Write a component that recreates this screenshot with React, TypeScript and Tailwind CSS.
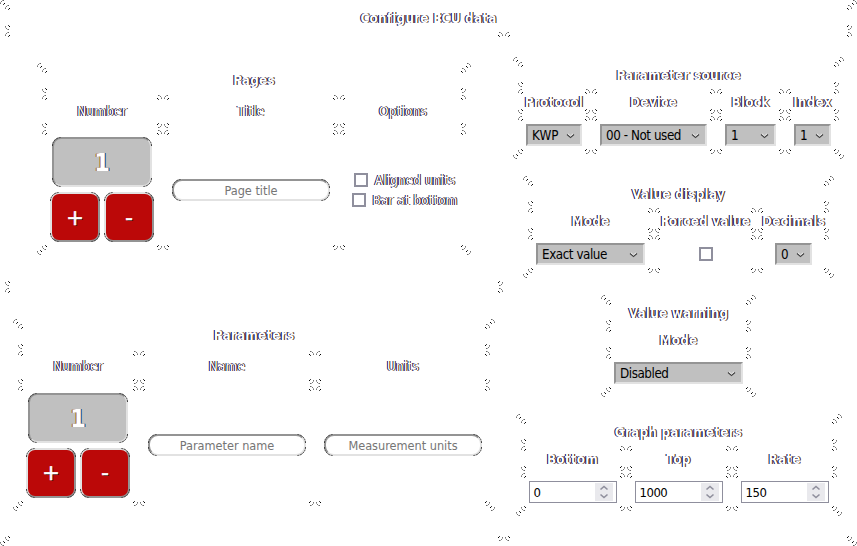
import type { ReactNode } from "react";

type Kids = { children?: ReactNode };

const flips = [
  "left-0 top-0",
  "right-0 top-0 -scale-x-100",
  "left-0 bottom-0 -scale-y-100",
  "right-0 bottom-0 -scale-x-100 -scale-y-100",
];

// Small stitched arcs drawn in the four corners of a table or a cell.
function Corners() {
  return (
    <>
      {flips.map((f) => (
        <svg key={f} className={`absolute ${f}`} width="5" height="5" shapeRendering="crispEdges">
          <path d="M0 3h1v1h-1zM1 1h1v1h-1z" fill="#777" />
          <path d="M0 2h1v1h-1zM2 0h1v1h-1z" fill="#aaa" />
          <path d="M3 0h1v1h-1z" fill="#666" />
          <path d="M4 3h1v1h-1z" fill="#000" />
          <path d="M3 4h1v1h-1z" fill="#444" />
        </svg>
      ))}
    </>
  );
}

// Dark edge that follows the rounded corners of a control.
function RoundEdges() {
  return (
    <div className="absolute -inset-[2px]">
      {flips.map((f) => (
        <svg key={f} className={`absolute ${f}`} width="10" height="10">
          <path
            d="M0.5 9A8.5 8.5 0 0 1 9 0.5"
            fill="none"
            stroke="#3a3a3a"
            strokeWidth="1"
            strokeDasharray="2 0.7"
          />
        </svg>
      ))}
    </div>
  );
}

function Cell({ children, className = "" }: Kids & { className?: string }) {
  return (
    <div className={`relative flex items-center justify-center ${className}`}>
      <Corners />
      {children}
    </div>
  );
}

const glyph =
  "whitespace-nowrap text-white [text-shadow:-1px_0_0_#000050,1px_0_0_#442000]";

function Label({ children, className = "" }: Kids & { className?: string }) {
  return <span className={`${glyph} text-[13.33px] leading-4 ${className}`}>{children}</span>;
}

function Table({ title, low = false, className, children }: Kids & { title: string; low?: boolean; className: string }) {
  return (
    <div className={`relative grid gap-[2px] p-[5px] ${className}`}>
      <Corners />
      <Cell className={low ? "col-span-full pt-[2px]" : "col-span-full"}>
        <Label className="font-bold tracking-[0.25px]">{title}</Label>
      </Cell>
      {children}
    </div>
  );
}

function Head({ children, strong = false }: Kids & { strong?: boolean }) {
  return (
    <Cell className={strong ? "pt-[2px]" : ""}>
      <Label className={strong ? "font-bold tracking-[0.25px]" : "tracking-[0.25px]"}>{children}</Label>
    </Cell>
  );
}

function Counter() {
  return (
    <div className="flex flex-col items-center gap-[5px] pb-px">
      <div className="relative flex h-[50px] w-[100px] items-center justify-center rounded-[9px] border-2 border-t-[#949494] border-l-[#949494] border-r-[#e2e2e2] border-b-[#e2e2e2] bg-[#c0c0c0]">
        <RoundEdges />
        <span className="pt-[2px] text-[25px] leading-6 font-bold text-white [text-shadow:-1px_0_0_#a86020,1px_0_0_#104080]">1</span>
      </div>
      <div className="flex gap-1">
        {["+", "-"].map((s) => (
          <div
            key={s}
            className="relative flex size-[50px] items-center justify-center rounded-[9px] border-2 border-t-[#e2e2e2] border-l-[#e2e2e2] border-r-[#949494] border-b-[#949494] bg-[#bb0808]"
          >
            <RoundEdges />
            <span className="pt-px text-[21px] leading-6 text-white [-webkit-text-stroke:0.6px_white] [font-family:'DejaVu_Sans',sans-serif] [text-shadow:1px_1px_0_#300]">{s}</span>
          </div>
        ))}
      </div>
    </div>
  );
}

function Field({ text }: { text: string }) {
  return (
    <div className="relative flex h-[22px] w-[158px] items-center justify-center rounded-[10px] border-2 border-t-[#949494] border-l-[#949494] border-r-[#e2e2e2] border-b-[#e2e2e2] bg-white">
      <RoundEdges />
      <span className="pt-[2px] text-[12.6px] leading-4 whitespace-nowrap text-[#757575]">{text}</span>
    </div>
  );
}

function Select({ text, className }: { text: string; className: string }) {
  return (
    <div className={`flex h-[22px] items-center justify-between border-2 border-t-[#949494] border-l-[#949494] border-r-[#e2e2e2] border-b-[#e2e2e2] bg-[#c0c0c0] pt-[2px] pr-[5px] pl-1 ${className}`}>
      <span className={`text-[13.33px] leading-4 whitespace-nowrap text-black ${text.length > 3 ? "tracking-[-0.45px]" : ""}`}>{text}</span>
      <svg width="9" height="6" viewBox="0 0 9 6">
        <path d="M1 1.5L4.5 4.5L8 1.5" fill="none" stroke="#444" strokeWidth="1.2" />
        <path d="M2 0.8L4.5 3L7 0.8" fill="none" stroke="#eee" strokeWidth="1" />
      </svg>
    </div>
  );
}

function Check() {
  return <span className="size-[14px] shrink-0 border-2 border-[#8f8f9d] bg-white" />;
}

function Spin({ value }: { value: string }) {
  return (
    <div className="flex h-[22px] w-[88px] items-center justify-between border border-[#8f8f9d] bg-white pr-[3px] pl-1">
      <span className="pt-[2px] text-[13px] leading-4 tracking-[-0.5px] text-black">{value}</span>
      <span className="flex h-[18px] w-[18px] items-center justify-center bg-[#e9e9ed]">
        <svg width="10" height="14" viewBox="0 0 10 14" fill="none" stroke="#8f8f9d" strokeWidth="1.6">
          <path d="M1.5 4.5L5 1.5L8.5 4.5M1.5 9.5L5 12.5L8.5 9.5" />
        </svg>
      </span>
    </div>
  );
}

export default function App() {
  return (
    <main className="relative grid h-[546px] w-[857px] grid-cols-[498px_347px] grid-rows-[25px_254px_253px] gap-[2px] overflow-hidden bg-white p-[5px] font-['DejaVu_Sans_Condensed','DejaVu_Sans',sans-serif]">
      <Corners />
      <Cell className="col-span-2 pt-[2px]">
        <Label className="font-bold tracking-[0.25px]">Configure ECU data</Label>
      </Cell>
      <Cell>
        <Table title="Pages" className="grid-cols-[120px_174px_126px] grid-rows-[25px_33px_120px]">
          <Head>Number</Head>
          <Head>Title</Head>
          <Head>Options</Head>
          <Cell><Counter /></Cell>
          <Cell><Field text="Page title" /></Cell>
          <Cell className="flex-col gap-[6px] pl-[3px]">
            <div className="flex h-[14px] items-center gap-[7px]"><Check /><Label className="pt-px tracking-[0.15px]">Aligned units</Label></div>
            <div className="flex h-[14px] items-center gap-[7px]"><Check /><Label className="pt-px tracking-[0.1px]">Bar at bottom</Label></div>
          </Cell>
        </Table>
      </Cell>
      <Cell className="col-start-2 row-span-2 row-start-2 flex-col gap-[17px]">
        <Table low title="Parameter source" className="grid-cols-[72px_123px_67px_53px] grid-rows-[25px_25px_38px]">
          <Head strong>Protocol</Head>
          <Head strong>Device</Head>
          <Head strong>Block</Head>
          <Head strong>Index</Head>
          <Cell><Select text="KWP" className="w-[56px]" /></Cell>
          <Cell><Select text="00 - Not used" className="w-[107px]" /></Cell>
          <Cell><Select text="1" className="w-[51px]" /></Cell>
          <Cell><Select text="1" className="w-[37px]" /></Cell>
        </Table>
        <Table low title="Value display" className="grid-cols-[125px_101px_71px] grid-rows-[25px_25px_38px]">
          <Head strong>Mode</Head>
          <Head strong>Forced value</Head>
          <Head strong>Decimals</Head>
          <Cell><Select text="Exact value" className="w-[109px]" /></Cell>
          <Cell><Check /></Cell>
          <Cell><Select text="0" className="w-[37px]" /></Cell>
        </Table>
        <Table low title="Value warning" className="grid-cols-[145px] grid-rows-[25px_25px_38px]">
          <Head strong>Mode</Head>
          <Cell><Select text="Disabled" className="w-[129px]" /></Cell>
        </Table>
        <Table low title="Graph parameters" className="grid-cols-[104px_104px_104px] grid-rows-[25px_25px_38px]">
          <Head strong>Bottom</Head>
          <Head strong>Top</Head>
          <Head strong>Rate</Head>
          <Cell><Spin value="0" /></Cell>
          <Cell><Spin value="1000" /></Cell>
          <Cell><Spin value="150" /></Cell>
        </Table>
      </Cell>
      <Cell>
        <Table title="Parameters" className="grid-cols-[120px_174px_174px] grid-rows-[25px_33px_120px]">
          <Head>Number</Head>
          <Head>Name</Head>
          <Head>Units</Head>
          <Cell><Counter /></Cell>
          <Cell className="pb-[2px]"><Field text="Parameter name" /></Cell>
          <Cell className="pb-[2px]"><Field text="Measurement units" /></Cell>
        </Table>
      </Cell>
    </main>
  );
}
